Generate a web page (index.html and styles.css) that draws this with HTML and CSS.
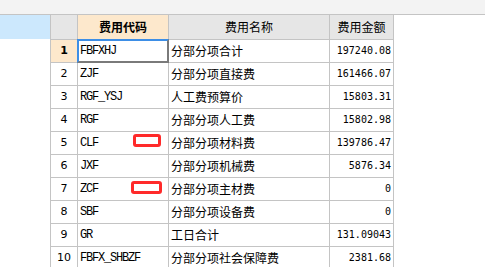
FILE: index.html
```html
<!DOCTYPE html>
<html>
<head>
<meta charset="utf-8">
<link rel="stylesheet" href="styles.css">
</head>
<body>
<div class="topbar"></div>
<div class="main">
  <div class="side"><div class="side-sel"></div></div>
  <table class="grid">
    <colgroup>
      <col class="c-num"><col class="c-code"><col class="c-name"><col class="c-amt">
    </colgroup>
    <thead>
      <tr>
        <th class="corner"></th>
        <th class="h-active">费用代码</th>
        <th>费用名称</th>
        <th>费用金额</th>
      </tr>
    </thead>
    <tbody>
      <tr><td class="num num-active">1</td><td class="code selected">FBFXHJ</td><td class="name">分部分项合计</td><td class="amt">197240.08</td></tr>
      <tr><td class="num">2</td><td class="code">ZJF</td><td class="name">分部分项直接费</td><td class="amt">161466.07</td></tr>
      <tr><td class="num">3</td><td class="code">RGF_YSJ</td><td class="name">人工费预算价</td><td class="amt">15803.31</td></tr>
      <tr><td class="num">4</td><td class="code">RGF</td><td class="name">分部分项人工费</td><td class="amt">15802.98</td></tr>
      <tr><td class="num">5</td><td class="code">CLF<span class="mark mark-a"></span></td><td class="name">分部分项材料费</td><td class="amt">139786.47</td></tr>
      <tr><td class="num">6</td><td class="code">JXF</td><td class="name">分部分项机械费</td><td class="amt">5876.34</td></tr>
      <tr><td class="num">7</td><td class="code">ZCF<span class="mark mark-b"></span></td><td class="name">分部分项主材费</td><td class="amt">0</td></tr>
      <tr><td class="num">8</td><td class="code">SBF</td><td class="name">分部分项设备费</td><td class="amt">0</td></tr>
      <tr><td class="num">9</td><td class="code">GR</td><td class="name">工日合计</td><td class="amt">131.09043</td></tr>
      <tr><td class="num">10</td><td class="code">FBFX_SHBZF</td><td class="name">分部分项社会保障费</td><td class="amt">2381.68</td></tr>
    </tbody>
  </table>
</div>
</body>
</html>
```

FILE: styles.css
```css
html, body {
  margin: 0;
  padding: 0;
  background: #ffffff;
  overflow: hidden;
}
body {
  width: 485px;
  height: 267px;
  font-family: "Noto Sans CJK SC", "Noto Sans", sans-serif;
  font-size: 12px;
  color: #000;
}
.topbar {
  height: 14px;
  background: #f3f3f3;
  border-bottom: 1px solid #c4c4c4;
}
.main {
  display: flex;
  align-items: flex-start;
}
.side {
  width: 50px;
  flex: none;
}
.side-sel {
  height: 24px;
  background: #cce8fd;
}
.grid {
  border-collapse: collapse;
  table-layout: fixed;
  width: 344px;
  border-left: 1px solid #c4c4c4;
}
.c-num { width: 27px; }
.c-code { width: 91px; }
.c-name { width: 161px; }
.c-amt { width: 64px; }
.grid th, .grid td {
  padding: 0;
  border-right: 1px solid #c4c4c4;
  border-bottom: 1px solid #c4c4c4;
  white-space: nowrap;
  overflow: visible;
}
.grid th {
  height: 24px;
  line-height: 24px;
  background: #e6e6e6;
  font-weight: normal;
  text-align: center;
}
.grid th.corner {
  background: #e6e6e6;
}
.grid th.h-active {
  background: #fde8cc;
  font-weight: bold;
}
.grid td {
  height: 22px;
  line-height: 22px;
}
.num {
  text-align: center;
  font-family: "DejaVu Sans", sans-serif;
  font-size: 11px;
}
.num-active {
  background: #fde8cc;
  font-weight: bold;
}
.code {
  position: relative;
  padding-left: 2px !important;
  font-family: "Liberation Mono", monospace;
  font-size: 12px;
  letter-spacing: -1.2px;
}
.selected::after {
  content: "";
  position: absolute;
  left: -1px;
  top: -1px;
  right: -1px;
  bottom: -1px;
  border-left: 2px solid #3d8ee6;
  border-top: 2px solid #3d8ee6;
  border-right: 2px solid #7a7a7a;
  border-bottom: 2px solid #7a7a7a;
}
.name {
  padding-left: 2px !important;
}
.amt {
  text-align: right;
  padding-right: 2px !important;
  font-family: "DejaVu Sans Mono", monospace;
  font-size: 10px;
}
.mark {
  position: absolute;
  border: 3px solid #ff2a2a;
  border-radius: 3px;
  box-sizing: border-box;
}
.mark-a {
  left: 55px;
  top: 2px;
  width: 28px;
  height: 13px;
}
.mark-b {
  left: 53px;
  top: 3px;
  width: 31px;
  height: 13px;
}
```
